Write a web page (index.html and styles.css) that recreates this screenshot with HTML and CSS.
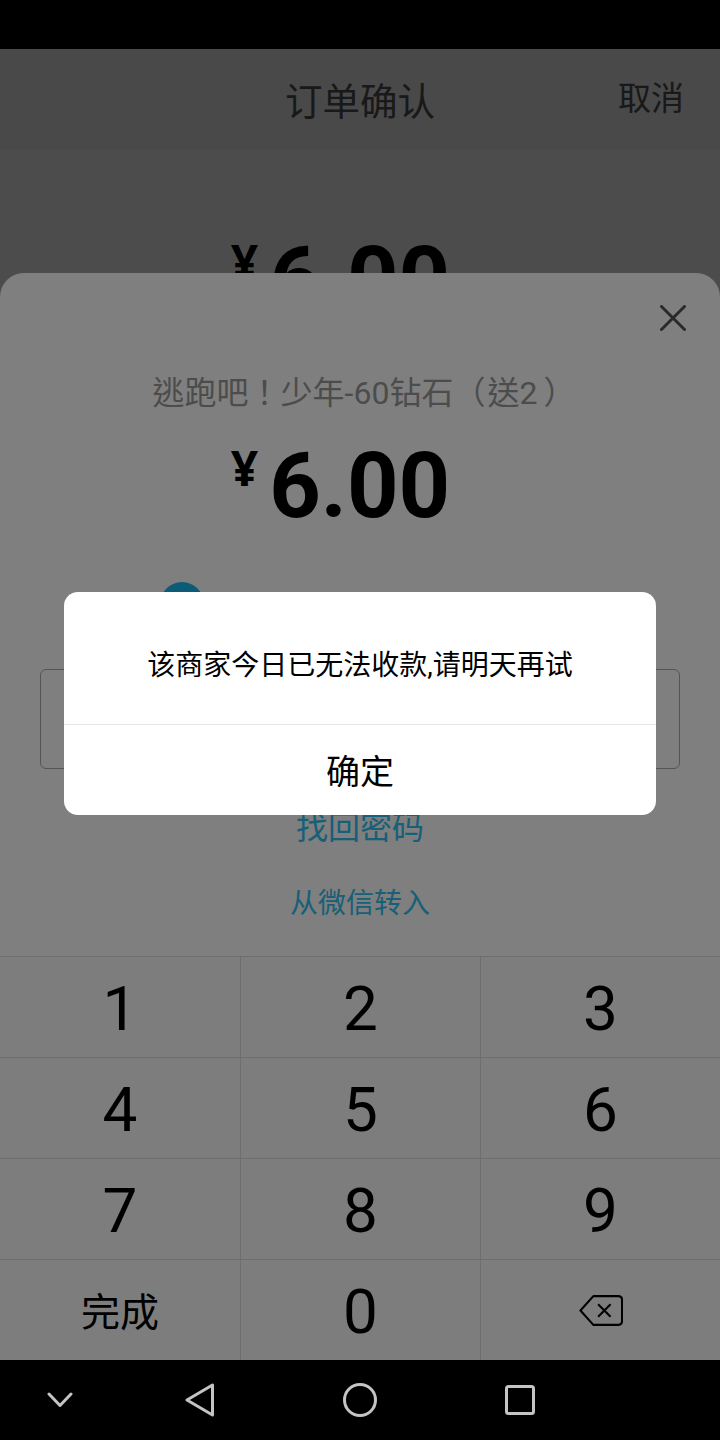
FILE: index.html
```html
<!DOCTYPE html>
<html lang="zh-CN">
<head>
  <meta charset="UTF-8">
  <meta name="viewport" content="width=device-width, initial-scale=1.0">
  <title>订单确认</title>
  <link rel="stylesheet" href="styles.css">
</head>
<body>
  <div class="phone">
    <div class="status-bar"></div>

    <div class="screen">
      <!-- Order page behind the sheet -->
      <div class="page">
        <div class="header">
          <div class="header-title">订单确认</div>
          <div class="header-cancel">取消</div>
        </div>
        <div class="price page-price">
          <span class="yen">¥</span><span class="amount">6.00</span>
        </div>
      </div>
      <div class="page-dim"></div>

      <!-- Payment sheet -->
      <div class="sheet">
        <div class="sheet-close">
          <svg width="26" height="26" viewBox="0 0 26 26">
            <path d="M1.500 1.500L24.500 24.500M24.500 1.500L1.500 24.500" fill="none" stroke="#555" stroke-width="3" stroke-linecap="round"/>
          </svg>
        </div>
        <div class="sheet-title">逃跑吧！少年-60钻石（<span class="sheet-gift">送2</span>）</div>
        <div class="price sheet-price">
          <span class="yen">¥</span><span class="amount">6.00</span>
        </div>
        <div class="pay-method">
          <div class="pay-dot"></div>
        </div>
        <div class="password-box"></div>
        <div class="link link-find">找回密码</div>
        <div class="link link-wechat">从微信转入</div>

        <div class="keypad">
          <div class="key">1</div>
          <div class="key">2</div>
          <div class="key">3</div>
          <div class="key">4</div>
          <div class="key">5</div>
          <div class="key">6</div>
          <div class="key">7</div>
          <div class="key">8</div>
          <div class="key">9</div>
          <div class="key key-done">完成</div>
          <div class="key">0</div>
          <div class="key key-back">
            <svg width="44" height="33" viewBox="0 0 46 34">
              <path d="M15 2H41Q45 2 45 6V28Q45 32 41 32H15L1.500 17Z" fill="none" stroke="#000" stroke-width="2.200" stroke-linejoin="round"/>
              <path d="M20 10.500L33 23.500M33 10.500L20 23.500" fill="none" stroke="#000" stroke-width="2.200"/>
            </svg>
          </div>
        </div>
      </div>
      <div class="screen-dim"></div>

      <!-- Alert dialog -->
      <div class="dialog">
        <div class="dialog-text">该商家今日已无法收款,请明天再试</div>
        <div class="dialog-btn">确定</div>
      </div>
    </div>

    <div class="nav-bar">
      <div class="nav-slot">
        <svg width="26" height="16" viewBox="0 0 26 16">
          <path d="M2 2L13 13.500L24 2" fill="none" stroke="#c4c4c4" stroke-width="3" stroke-linecap="round" stroke-linejoin="round"/>
        </svg>
      </div>
      <div class="nav-slot">
        <svg width="30" height="34" viewBox="0 0 30 34">
          <path d="M27.500 2V32L2 17Z" fill="none" stroke="#c4c4c4" stroke-width="3" stroke-linejoin="round"/>
        </svg>
      </div>
      <div class="nav-slot">
        <svg width="34" height="34" viewBox="0 0 34 34">
          <circle cx="17" cy="17" r="15.500" fill="none" stroke="#c4c4c4" stroke-width="3"/>
        </svg>
      </div>
      <div class="nav-slot">
        <svg width="30" height="30" viewBox="0 0 30 30">
          <rect x="1.500" y="1.500" width="27" height="27" rx="2" fill="none" stroke="#c4c4c4" stroke-width="3"/>
        </svg>
      </div>
    </div>
  </div>
</body>
</html>
```

FILE: styles.css
```css
* {
  box-sizing: border-box;
}

body {
  margin: 0;
  background-color: #000;
  font-family: Roboto, "Noto Sans CJK SC", sans-serif;
  color: #000;
}

.phone {
  display: flex;
  flex-direction: column;
  width: 720px;
  height: 1440px;
  overflow: hidden;
}

.status-bar {
  height: 49px;
  background-color: #000;
}

.screen {
  position: relative;
  flex: 1;
  overflow: hidden;
  background-color: #fff;
}

/* Page behind the sheet */
.page {
  height: 100%;
}

.header {
  position: relative;
  display: flex;
  justify-content: center;
  height: 100px;
  padding-top: 30px;
  background-color: #f4f4f4;
}

.header-title {
  font-size: 37.5px;
  line-height: 46px;
  color: #555;
}

.header-cancel {
  position: absolute;
  right: 36px;
  top: 29px;
  font-size: 33px;
  line-height: 42px;
  color: #555;
}

.page-dim {
  position: absolute;
  inset: 0;
  background-color: rgba(0, 0, 0, 0.4);
}

.screen-dim {
  position: absolute;
  inset: 0;
  background-color: rgba(0, 0, 0, 0.5);
}

/* Price, same block on the page and on the sheet */
.price {
  display: flex;
  justify-content: center;
  align-items: flex-start;
  padding-right: 39px;
}

.page-price {
  padding-top: 82px;
}

.yen {
  margin-right: 11px;
  margin-top: 3px;
  font-family: "Noto Sans", sans-serif;
  font-weight: 700;
  font-size: 48px;
  line-height: 56px;
}

.amount {
  font-weight: 700;
  font-size: 90px;
  line-height: 100px;
}

/* Payment sheet */
.sheet {
  position: absolute;
  left: 0;
  right: 0;
  top: 224px;
  bottom: 0;
  display: flex;
  flex-direction: column;
  align-items: center;
  background-color: #fff;
  border-radius: 24px 24px 0 0;
}

.sheet-close {
  position: absolute;
  right: 34px;
  top: 32px;
  line-height: 0;
}

.sheet-title {
  margin-top: 99px;
  padding-left: 8px;
  font-family: Roboto, "Noto Sans CJK TC", sans-serif;
  font-feature-settings: "locl" 0;
  font-size: 32px;
  line-height: 42px;
  color: #999;
}

.sheet-gift {
  padding: 0 6px 0 2px;
}

.sheet-price {
  width: 100%;
  margin-top: 23px;
}

.pay-method {
  display: flex;
  width: 100%;
  height: 44px;
  margin-top: 45px;
  padding-left: 160px;
}

.pay-dot {
  width: 44px;
  height: 44px;
  border-radius: 50%;
  background-color: #18b8f0;
}

.password-box {
  flex: none;
  width: 640px;
  height: 100px;
  margin-top: 43px;
  border: 1px solid #aaa;
  border-radius: 6px;
}

.link {
  color: #30c0f0;
  text-align: center;
}

.link-find {
  margin-top: 38px;
  font-size: 32px;
  line-height: 42px;
}

.link-wechat {
  margin-top: 35px;
  font-size: 28px;
  line-height: 40px;
}

/* Number pad, the gaps show through as the grid lines */
.keypad {
  position: absolute;
  left: 0;
  right: 0;
  bottom: 0;
  display: grid;
  grid-template-columns: 240px 239px 239px;
  grid-auto-rows: 100px;
  gap: 1px;
  padding-top: 1px;
  background-color: #dcdcdc;
}

.key {
  display: flex;
  justify-content: center;
  align-items: center;
  padding-top: 3px;
  background-color: #fafafa;
  font-size: 62px;
}

.key-done {
  padding-top: 0;
  padding-bottom: 2px;
  font-size: 39px;
}

.key-back {
  padding-top: 0;
}

/* Alert dialog */
.dialog {
  position: absolute;
  left: 64px;
  top: 543px;
  width: 592px;
  height: 223px;
  background-color: #fff;
  border-radius: 14px;
}

.dialog-text {
  height: 133px;
  padding-top: 51px;
  border-bottom: 1px solid #e5e5e5;
  font-size: 28px;
  line-height: 46px;
  text-align: center;
}

.dialog-btn {
  padding-top: 24px;
  font-size: 34px;
  line-height: 46px;
  text-align: center;
}

/* Android nav bar */
.nav-bar {
  display: grid;
  grid-template-columns: 120px 160px 160px 160px;
  align-items: center;
  height: 80px;
  background-color: #000;
}

.nav-slot {
  display: flex;
  justify-content: center;
  align-items: center;
  line-height: 0;
}
```
